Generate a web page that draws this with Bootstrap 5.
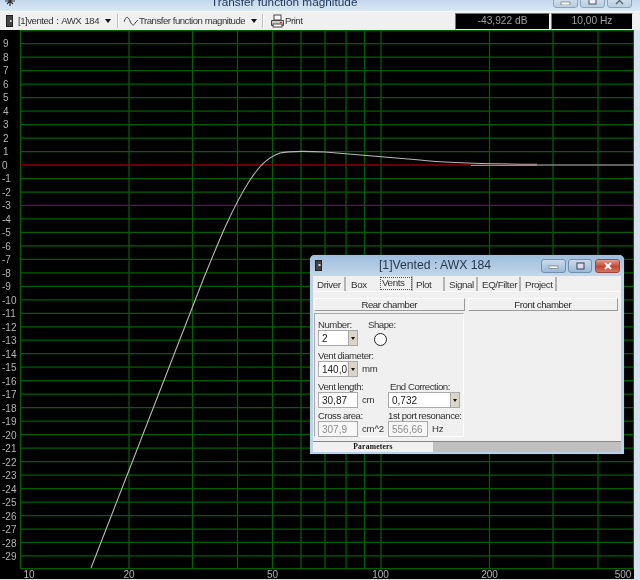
<!DOCTYPE html>
<html lang="en">
<head>
<meta charset="utf-8">
<title>Transfer function magnitude</title>
<link href="https://cdn.jsdelivr.net/npm/bootstrap@5.3.0/dist/css/bootstrap.min.css" rel="stylesheet">
<style>
html,body{margin:0;background:#000;overflow:hidden}
body{font-family:"Liberation Sans",Arial,sans-serif;font-size:10px;line-height:1.2;color:#2a2a2a}
.app-root{width:640px;height:580px;overflow:hidden;background:#d6e4f2;filter:blur(.3px)}
.win-title{height:11px;flex:none;background:linear-gradient(#c4d8ec,#d9e7f4);overflow:hidden}
.win-title-icon{margin:-4px 0 0 4px;width:12px;height:10px;flex:none}
.win-title-text{margin:-5px 0 0 195px;font-size:11.8px;line-height:14px;color:#1d3557;white-space:nowrap}
.win-btns{margin-left:auto;margin-right:8px;margin-top:-6px;gap:2px}
.win-btn{width:25px;height:14px;border:1px solid #8ba3bb;border-radius:3px;background:linear-gradient(#dbe7f2,#b9cde0);display:flex;align-items:center;justify-content:center}
.tool-strip{height:19px;flex:none;background:#f0f0f0;padding-right:7px;border-top:1px solid #f8f8f8;font-size:9.6px;letter-spacing:-.48px;color:#333}
.tool-doc{margin-left:6px;margin-right:5px;flex:none}
.tool-caret{width:0;height:0;border-left:3.5px solid transparent;border-right:3.5px solid transparent;border-top:4px solid #111;flex:none}
.tool-sep{width:1px;height:14px;background:#bdbdbd;box-shadow:1px 0 0 #fff;flex:none;margin-left:6px}
.tool-sep-b{margin-left:5px}
.tool-wave{margin-left:6px;margin-right:1px;flex:none}
.tool-print{margin-left:7px;flex:none}
.tool-name{width:87px;white-space:nowrap;word-spacing:1px}
.tool-view{width:112px;white-space:nowrap}
.tool-readout{background:#000;color:#a0a0a0;font-size:10.2px;letter-spacing:0;height:17px;display:flex;align-items:center;justify-content:center;border:1px solid #777;border-right-color:#eee;border-bottom-color:#eee}
.read-a{width:95px;margin-left:auto}
.read-b{width:82px;margin-left:1px}
.plot-row{height:549px;flex:none;position:relative;background:#000;margin-right:6px}
.plot-svg{display:block;width:634px;height:549px}
.axis-txt{font-family:"Liberation Sans",Arial,sans-serif;font-size:10px;fill:#b4b4b4}
.vent-win{position:absolute;left:310px;top:225px;width:314px;height:199px;background:#b9d3ea;border-radius:5px 5px 0 0;padding:0 3px 2px;box-shadow:0 0 1px #6d8aa5;display:flex;flex-direction:column}
.vent-head{height:21px;flex:none;background:linear-gradient(#9dbddc,#c2d7ea);margin:0 -3px;border-radius:5px 5px 0 0;padding:0 4px 0 5px}
.vent-head-title{flex:1;text-align:center;font-size:12.2px;color:#27384d;padding-left:6px}
.v-btn{height:14px;border:1px solid #6f8fae;border-radius:3px;display:flex;align-items:center;justify-content:center;background:linear-gradient(#c9dbec,#9cb9d5)}
.v-min{width:25px}.v-max{width:24px;margin-left:2px}
.v-close{width:25px;margin-left:3px;border-color:#9c4a3f;background:linear-gradient(#e19d90,#c2452f 55%,#d27766)}
.vent-inner{flex:1;background:#f0f0f0;display:flex;flex-direction:column;min-height:0}
.vent-tabs{height:16px;flex:none;flex-wrap:nowrap;font-size:9.8px;letter-spacing:-.4px;color:#333;border-bottom:1px solid #fafafa}
.vent-tab{padding:2px 0 0 4px;border-right:2px solid #b4b4b4;height:14px;margin-top:1px;line-height:12px;white-space:nowrap}
.tb-1{width:33px}.tb-2{width:33px;padding-left:5px;border-right-color:transparent}.tb-3{width:34px;outline:1px dotted #555;outline-offset:-2px;height:15px;margin-top:0;padding-top:1px;padding-left:3px}
.tb-4{width:31px;margin-left:1px;padding-left:2px}.tb-5{width:33px}.tb-6{width:43px}.tb-7{width:36px}
.vent-chambers{padding:6px 3px 0 1px;gap:3px;flex:none}
.chamber-btn{--bs-btn-padding-y:0;--bs-btn-padding-x:0;--bs-btn-font-size:9.6px;--bs-btn-border-radius:0;--bs-btn-color:#2a2a2a;letter-spacing:-.42px;flex:1;height:13px;line-height:11px;background:#f0f0f0;border:1px solid;border-color:#fff #9a9a9a #9a9a9a #fff;color:#2a2a2a}
.vent-body{flex:1;padding:2px 3px 3px 1px;min-height:0}
.rear-panel{width:150px;height:124px;border:1px solid;border-color:#a8a8a8 #fff #fff #a8a8a8;padding:5px 3px 0}
.lbl{font-size:9.6px;letter-spacing:-.45px;line-height:11px;color:#333;white-space:nowrap}
.lbl-shift{margin-left:2px}
.unit{font-size:9.6px;letter-spacing:-.2px;color:#333;margin-left:4px;line-height:15px;white-space:nowrap}
.fld{--bs-border-radius:0;padding:0 0 0 3px;height:16px;min-height:0;font-size:10px;line-height:14px;border:1px solid #a9a9a9;border-radius:0;background:#fff;color:#222;box-shadow:none}
.fld-dis{color:#8c8c8c;background:#f7f7f7}
.fld-dis:disabled{background:#f7f7f7;color:#8c8c8c}
.w-31{width:31px}.w-40{width:40px}.w-63{width:63px}
.combo{position:relative;display:flex}
.combo-arrow{width:9px;flex:none;background:#d9d6c8;border:1px solid #a9a9a9;border-left:0;display:flex;align-items:center;justify-content:center}
.combo-arrow i{border-left:2px solid transparent;border-right:2px solid transparent;border-top:3px solid #111;display:block}
.shape-col{margin-left:10px}
.shape-ring{width:13px;height:13px;border:1px solid #222;border-radius:50%;background:#fff;margin:3px 0 0 6px}
.row-gap-a{margin-top:4px}
.row-gap-b{margin-top:2px}
.col-left{width:70px;flex:none}
.row-b{display:flex}
.param-bar{height:11px;flex:none;margin-top:1px;background:#c0c0c0;border-top:1px solid #888;display:flex}
.param-tab{width:120px;background:#f0f0f0;text-align:center;font-family:"Liberation Serif",serif;font-weight:700;font-size:7.6px;line-height:10px;color:#111;letter-spacing:.2px}
.bottom-line{height:1px;flex:none;background:#d6e4f2}
</style>
</head>
<body>
<div class="app-root d-flex flex-column">
  <div class="win-title d-flex">
    <svg class="win-title-icon" viewBox="0 0 12 10"><path d="M6 0v10M1 5h10M3 2l6 6M9 2l-6 6" stroke="#333" stroke-width="1.2" fill="none"/></svg>
    <div class="win-title-text">Transfer function magnitude</div>
    <div class="win-btns d-flex">
      <div class="win-btn"><svg width="11" height="8" viewBox="0 0 11 8"><rect x="1" y="5" width="9" height="3" fill="#fff" stroke="#566" stroke-width=".6"/></svg></div>
      <div class="win-btn"><svg width="11" height="8" viewBox="0 0 11 8"><rect x="2" y="0" width="7" height="7" fill="#eef" stroke="#455" stroke-width="1"/></svg></div>
      <div class="win-btn"><svg width="11" height="8" viewBox="0 0 11 8"><path d="M2 0l7 7M9 0L2 7" stroke="#566" stroke-width="1.4"/></svg></div>
    </div>
  </div>
  <div class="tool-strip d-flex align-items-center">
    <svg class="tool-doc" width="7" height="12" viewBox="0 0 7 12"><rect x=".5" y=".5" width="6" height="11" fill="#444" stroke="#222"/><rect x="4" y="5" width="1.5" height="2" fill="#ddd"/></svg>
    <span class="tool-name">[1]vented : AWX 184</span>
    <i class="tool-caret"></i>
    <i class="tool-sep"></i>
    <svg class="tool-wave" width="14" height="10" viewBox="0 0 14 10"><path d="M0 6C2 0 4 0 6 5s4 5 5 2l3-3" stroke="#444" fill="none"/></svg>
    <span class="tool-view">Transfer function magnitude</span>
    <i class="tool-caret"></i>
    <i class="tool-sep tool-sep-b"></i>
    <svg class="tool-print" width="15" height="14" viewBox="0 0 15 14"><rect x="4" y="1" width="7" height="5" fill="#fff" stroke="#444"/><path d="M1.5 6.500h12v5h-12z" fill="#ccc" stroke="#444"/><rect x="3" y="10" width="9" height="3" fill="#fff" stroke="#444"/><rect x="10" y="8" width="2" height="1" fill="#c33"/></svg>
    <span class="text-nowrap">Print</span>
    <div class="tool-readout read-a">-43,922 dB</div>
    <div class="tool-readout read-b">10,00 Hz</div>
  </div>
  <div class="plot-row">
    <svg class="plot-svg" viewBox="0 30 634 549">
      <rect x="0" y="30" width="634" height="549" fill="#000"/>
      <path stroke="#006000" stroke-width="1.25" fill="none" d="M20 30.500H634M20 43.700H634M20 57.200H634M20 70.600H634M20 84.100H634M20 97.600H634M20 111H634M20 124.500H634M20 138H634M20 151.500H634M20 178.500H634M20 192H634M20 218.900H634M20 232.400H634M20 245.900H634M20 259.400H634M20 272.800H634M20 286.300H634M20 299.800H634M20 313.300H634M20 326.800H634M20 340.200H634M20 353.700H634M20 367.200H634M20 380.700H634M20 394.200H634M20 407.600H634M20 421.100H634M20 434.600H634M20 448.100H634M20 461.600H634M20 475H634M20 488.500H634M20 502H634M20 515.500H634M20 529H634M20 542.400H634M20 555.900H634M20 568.700H634"/>
      <path stroke="#006000" stroke-width="1.25" fill="none" d="M20.500 30V569M129 30V569M192.500 30V569M237.500 30V569M272.500 30V569M301 30V569M325 30V569M346 30V569M364.500 30V569M381 30V569M489.500 30V569M553 30V569M598 30V569M633.500 30V569"/>
      <path stroke="#900000" stroke-width="1.700" fill="none" d="M20 165H471"/>
      <path stroke="#7a007a" stroke-width="1.200" fill="none" d="M20 205.400H634"/>
      <path stroke="#b8b8b8" stroke-width="1.100" fill="none" d="M91 568L203 280C218 243 232 208 250 180C258 168 266 158 280 153C288 151 305 151 325 152C350 154 395 158 420 160C445 163 490 164 537 164.300"/>
      <path stroke="#808080" stroke-width="1.300" fill="none" d="M537 165H634"/>
      <path stroke="#d87070" stroke-width="1.200" fill="none" d="M471 165.300H537"/>
      <g class="axis-txt">
        <text x="3" y="47">9</text><text x="3" y="60.500">8</text><text x="3" y="74">7</text><text x="3" y="87.500">6</text><text x="3" y="101">5</text><text x="3" y="114.500">4</text><text x="3" y="128">3</text><text x="3" y="141.500">2</text><text x="3" y="155">1</text><text x="2" y="168.500">0</text>
        <text x="2" y="182">-1</text><text x="2" y="195.500">-2</text><text x="2" y="209">-3</text><text x="2" y="222.500">-4</text><text x="2" y="236">-5</text><text x="2" y="249.500">-6</text><text x="2" y="263">-7</text><text x="2" y="276.500">-8</text><text x="2" y="290">-9</text>
        <text x="2" y="303.500">-10</text><text x="2" y="317">-11</text><text x="2" y="330.500">-12</text><text x="2" y="344">-13</text><text x="2" y="357.500">-14</text><text x="2" y="371">-15</text><text x="2" y="384.500">-16</text><text x="2" y="398">-17</text><text x="2" y="411.500">-18</text><text x="2" y="425">-19</text>
        <text x="2" y="438.500">-20</text><text x="2" y="452">-21</text><text x="2" y="465.500">-22</text><text x="2" y="479">-23</text><text x="2" y="492.500">-24</text><text x="2" y="506">-25</text><text x="2" y="519.500">-26</text><text x="2" y="533">-27</text><text x="2" y="546.500">-28</text><text x="2" y="559.500">-29</text>
        <text x="29" y="578" text-anchor="middle">10</text><text x="129" y="578" text-anchor="middle">20</text><text x="272.500" y="578" text-anchor="middle">50</text><text x="380.500" y="578" text-anchor="middle">100</text><text x="489.500" y="578" text-anchor="middle">200</text><text x="623" y="578" text-anchor="middle">500</text>
      </g>
    </svg>
    <div class="vent-win">
      <div class="vent-head d-flex align-items-center">
        <svg width="8" height="11" viewBox="0 0 8 11"><rect x=".5" y=".5" width="6" height="10" fill="#444" stroke="#222"/><rect x="3.500" y="4" width="2" height="2" fill="#ddd"/></svg>
        <div class="vent-head-title">[1]Vented : AWX 184</div>
        <div class="v-btn v-min"><svg width="11" height="6" viewBox="0 0 11 6"><rect x="1" y="3" width="9" height="2.500" fill="#fff" stroke="#567" stroke-width=".6"/></svg></div>
        <div class="v-btn v-max"><svg width="9" height="8" viewBox="0 0 9 8"><rect x="1" y="1" width="7" height="6" fill="#dde" stroke="#345" stroke-width="1"/></svg></div>
        <div class="v-btn v-close"><svg width="10" height="8" viewBox="0 0 10 8"><path d="M2 1l6 6M8 1L2 7" stroke="#fff" stroke-width="2"/></svg></div>
      </div>
      <div class="vent-inner">
        <div class="vent-tabs nav">
          <div class="vent-tab tb-1">Driver</div>
          <div class="vent-tab tb-2">Box</div>
          <div class="vent-tab tb-3">Vents</div>
          <div class="vent-tab tb-4">Plot</div>
          <div class="vent-tab tb-5">Signal</div>
          <div class="vent-tab tb-6">EQ/Filter</div>
          <div class="vent-tab tb-7">Project</div>
        </div>
        <div class="vent-chambers d-flex">
          <button type="button" class="btn chamber-btn">Rear chamber</button>
          <button type="button" class="btn chamber-btn">Front chamber</button>
        </div>
        <div class="vent-body">
          <div class="rear-panel">
            <div class="d-flex">
              <div>
                <div class="lbl">Number:</div>
                <div class="combo"><input class="form-control fld w-31" value="2"><span class="combo-arrow"><i></i></span></div>
              </div>
              <div class="shape-col">
                <div class="lbl">Shape:</div>
                <div class="shape-ring"></div>
              </div>
            </div>
            <div class="lbl row-gap-a">Vent diameter:</div>
            <div class="d-flex">
              <div class="combo"><input class="form-control fld w-31" value="140,0"><span class="combo-arrow"><i></i></span></div>
              <span class="unit">mm</span>
            </div>
            <div class="row-b row-gap-a">
              <div class="col-left">
                <div class="lbl">Vent length:</div>
                <div class="d-flex"><input class="form-control fld w-40" value="30,87"><span class="unit">cm</span></div>
              </div>
              <div>
                <div class="lbl lbl-shift">End Correction:</div>
                <div class="combo"><input class="form-control fld w-63" value="0,732"><span class="combo-arrow"><i></i></span></div>
              </div>
            </div>
            <div class="row-b row-gap-b">
              <div class="col-left">
                <div class="lbl">Cross area:</div>
                <div class="d-flex"><input class="form-control fld fld-dis w-40" value="307,9" disabled><span class="unit">cm^2</span></div>
              </div>
              <div>
                <div class="lbl">1st port resonance:</div>
                <div class="d-flex"><input class="form-control fld fld-dis w-40" value="556,66" disabled><span class="unit">Hz</span></div>
              </div>
            </div>
          </div>
        </div>
        <div class="param-bar"><div class="param-tab">Parameters</div></div>
      </div>
    </div>
  </div>
  <div class="bottom-line"></div>
</div>
<script src="https://cdn.jsdelivr.net/npm/bootstrap@5.3.0/dist/js/bootstrap.bundle.min.js"></script>
</body>
</html>
